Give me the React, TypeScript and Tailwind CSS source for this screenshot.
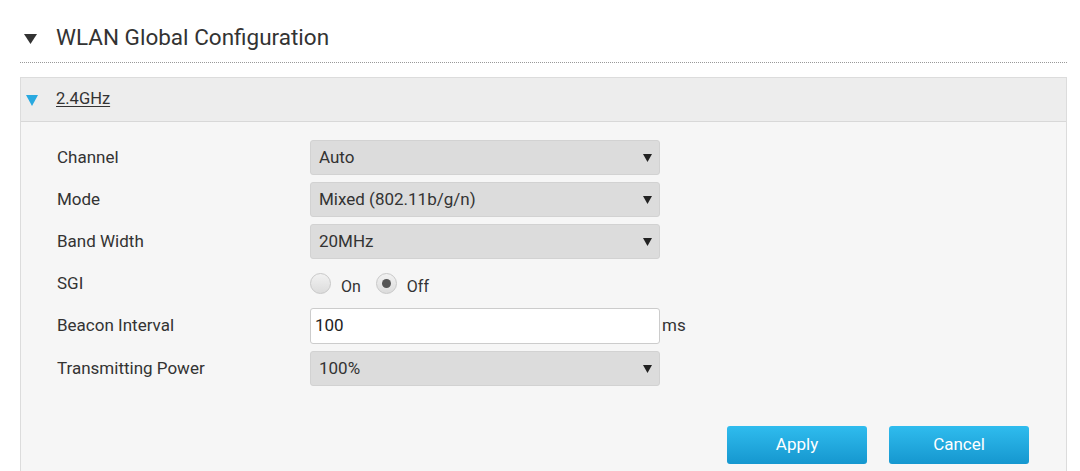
import React, { useState } from "react";

const SelectRow = ({ value }: { value: string }) => (
  <div className="relative w-[350px] h-[35px] bg-[#dcdcdc] border border-[#d2d2d2] rounded-[3px] flex items-center pl-[8px] text-[17px] text-[#333]">
    {value}
    <svg className="absolute right-[7px] top-1/2 -translate-y-1/2" width="9" height="8" viewBox="0 0 9 8">
      <path d="M0 0 L9 0 L4.5 8 Z" fill="#222" />
    </svg>
  </div>
);

const Radio = ({ checked }: { checked: boolean }) => (
  <span className="w-[21px] h-[21px] rounded-full border border-[#c8c8c8] bg-gradient-to-b from-[#f2f2f2] to-[#dcdcdc] flex items-center justify-center">
    {checked && <span className="w-[9px] h-[9px] rounded-full bg-[#555]" />}
  </span>
);

export default function App() {
  const [sgi] = useState<"on" | "off">("off");

  const rowLabel = "w-[253px] text-[17px] text-[#333]";

  return (
    <div className="w-[1080px] h-[471px] bg-white overflow-hidden font-['Roboto',sans-serif]">
      {/* Section title */}
      <div className="flex items-center h-[40px] mt-[18px] pl-[24px]">
        <svg className="mr-[19px] mt-[2px]" width="13" height="10" viewBox="0 0 13 10">
          <path d="M0 0 L13 0 L6.5 10 Z" fill="#333" />
        </svg>
        <h2 className="text-[22.5px] text-[#333]">WLAN Global Configuration</h2>
      </div>
      <div className="mx-[20px] w-[1047px] mt-[4px] border-t border-dotted border-[#999]" />

      {/* 2.4GHz panel */}
      <div className="ml-[20px] w-[1047px] mt-[14px] border-l border-r border-t border-[#dcdcdc]">
        <div className="h-[44px] bg-[#ededed] border-b border-[#d8d8d8] flex items-center pl-[5px]">
          <svg className="mr-[18px] mt-[1px]" width="12" height="11" viewBox="0 0 12 11">
            <path d="M0 0 L12 0 L6 11 Z" fill="#29a9e0" />
          </svg>
          <span className="text-[16.5px] text-[#333] underline underline-offset-2">2.4GHz</span>
        </div>

        <div className="bg-[#f6f6f6] h-[360px] pl-[36px] pt-[18px]">
          <div className="flex flex-col gap-[7px]">
            <div className="flex items-center">
              <span className={rowLabel}>Channel</span>
              <SelectRow value="Auto" />
            </div>
            <div className="flex items-center">
              <span className={rowLabel}>Mode</span>
              <SelectRow value="Mixed (802.11b/g/n)" />
            </div>
            <div className="flex items-center">
              <span className={rowLabel}>Band Width</span>
              <SelectRow value="20MHz" />
            </div>
            <div className="flex items-center h-[35px]">
              <span className={rowLabel}>SGI</span>
              <div className="flex items-center text-[16px] text-[#333]">
                <Radio checked={sgi === "on"} />
                <span className="ml-[10px] mr-[15px] mt-[6px]">On</span>
                <Radio checked={sgi === "off"} />
                <span className="ml-[10px] mt-[6px]">Off</span>
              </div>
            </div>
            <div className="flex items-center">
              <span className={rowLabel}>Beacon Interval</span>
              <div className="w-[350px] h-[36px] bg-white border border-[#ccc] rounded-[3px] flex items-center pl-[4px] text-[17px] text-[#222]">
                100
              </div>
              <span className="ml-[2px] text-[17px] text-[#333]">ms</span>
            </div>
            <div className="flex items-center">
              <span className={rowLabel}>Transmitting Power</span>
              <SelectRow value="100%" />
            </div>
          </div>

          <div className="flex justify-end gap-[22px] pr-[37px] mt-[40px]">
            <button className="w-[140px] h-[38px] rounded-[3px] bg-gradient-to-b from-[#2fbcee] to-[#1597cf] text-white text-[17px]">
              Apply
            </button>
            <button className="w-[140px] h-[38px] rounded-[3px] bg-gradient-to-b from-[#2fbcee] to-[#1597cf] text-white text-[17px]">
              Cancel
            </button>
          </div>
        </div>
      </div>
    </div>
  );
}
